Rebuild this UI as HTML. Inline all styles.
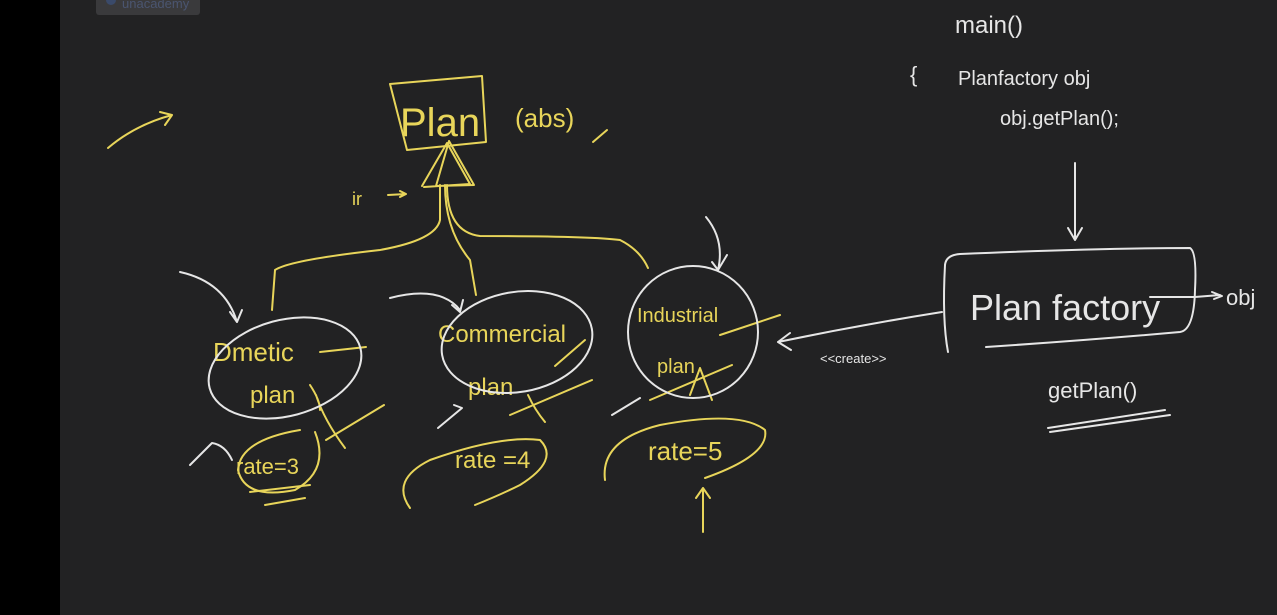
<!DOCTYPE html>
<html><head><meta charset="utf-8"><style>
html,body{margin:0;padding:0;width:1277px;height:615px;overflow:hidden;background:#000}
svg{display:block}
text{font-family:"Liberation Sans",sans-serif}
</style></head><body>
<svg width="1277" height="615" viewBox="0 0 1277 615" xmlns="http://www.w3.org/2000/svg">
<rect x="0" y="0" width="1277" height="615" fill="#000"/>
<rect x="60" y="0" width="1217" height="615" fill="#222223"/>
<rect x="96" y="-5" width="104" height="20" rx="3" fill="#3a3a3c"/>
<circle cx="111" cy="0" r="5" fill="#3a4a6a"/>
<text x="122" y="8" font-size="13" fill="#4a5570">unacademy</text>

<g fill="none" stroke="#e8d55a" stroke-width="2" stroke-linecap="round" stroke-linejoin="round">
<!-- Plan box -->
<path d="M390 84 L482 76 L486 142 L407 150 Z"/>
<path d="M436 186 L449 141 L474 185 Z M422 186 L447 143 L470 184 L424 187"/>
<path d="M440 185 L440 220 Q436 240 380 250 Q290 260 275 270 L272 310"/>
<path d="M445 185 Q445 230 470 260 L476 295"/>
<path d="M447 185 Q447 232 480 236 Q590 236 620 240 Q640 250 648 268"/>
<path d="M108 148 Q135 125 172 115 M160 112 L172 115 L165 125"/>
<path d="M593 142 L607 130"/>
<path d="M388 195 L406 194 M400 191 L406 194 L400 197"/>
<!-- strike lines -->
<path d="M320 352 L366 347"/>
<path d="M310 385 Q320 400 320 410 M316 395 Q324 420 345 448"/>
<path d="M326 440 L384 405"/>
<path d="M555 366 L585 340"/>
<path d="M510 415 L592 380 M528 395 Q535 410 545 422"/>
<path d="M720 335 L780 315"/>
<path d="M650 400 L732 365 M690 395 L700 368 L712 400"/>
<!-- rate ellipses -->
<path d="M300 430 Q240 440 238 470 Q245 500 295 490 Q330 470 315 432"/>
<path d="M250 492 L310 485 M265 505 L305 498"/>
<path d="M410 508 Q390 480 430 460 Q500 435 540 440 Q560 460 520 485 Q500 495 475 505"/>
<path d="M605 480 Q600 440 660 425 Q740 410 765 430 Q770 455 705 478"/>
<path d="M703 532 L703 488 M696 498 L703 488 L710 498"/>
</g>
<g fill="#e8d55a" font-size="28">
<text x="400" y="136" font-size="40">Plan</text>
<text x="515" y="127" font-size="26">(abs)</text>
<text x="352" y="205" font-size="18">ir</text>
<text x="213" y="361" font-size="26">Dmetic</text>
<text x="250" y="403" font-size="24">plan</text>
<text x="438" y="342" font-size="24">Commercial</text>
<text x="468" y="395" font-size="24">plan</text>
<text x="637" y="322" font-size="20">Industrial</text>
<text x="657" y="373" font-size="20">plan</text>
<text x="236" y="474" font-size="22">rate=3</text>
<text x="455" y="468" font-size="24">rate =4</text>
<text x="648" y="460" font-size="26">rate=5</text>
</g>

<g fill="none" stroke="#e6e6e6" stroke-width="2" stroke-linecap="round" stroke-linejoin="round">
<ellipse cx="285" cy="368" rx="78" ry="48" transform="rotate(-15 285 368)"/>
<ellipse cx="517" cy="342" rx="76" ry="50" transform="rotate(-10 517 342)"/>
<ellipse cx="693" cy="332" rx="65" ry="66"/>
<path d="M180 272 Q225 282 237 322 M230 312 L237 322 L242 310"/>
<path d="M390 298 Q440 285 460 310 M452 305 L460 312 L463 300"/>
<path d="M706 217 Q725 240 718 270 M712 262 L718 270 L727 255"/>
<path d="M190 465 L212 443 Q225 445 232 460"/>
<path d="M438 428 L462 408 L454 405"/>
<path d="M612 415 L640 398"/>
<path d="M942 312 Q860 325 778 342 M790 333 L778 342 L791 350"/>
<path d="M1075 163 L1075 237 M1068 228 L1075 240 L1082 228"/>
<path d="M945 265 Q946 255 960 254 Q1100 248 1190 248 Q1197 252 1195 290 Q1194 330 1180 332 Q1090 340 986 347"/>
<path d="M945 265 Q942 320 948 352"/>
<path d="M1150 297 L1195 297 L1220 295 M1212 292 L1222 296 L1214 299"/>
<path d="M1048 428 L1165 410 M1050 432 L1170 415"/>
</g>
<g fill="#e6e6e6">
<text x="955" y="33" font-size="24">main()</text>
<text x="910" y="82" font-size="22">{</text>
<text x="958" y="85" font-size="20">Planfactory  obj</text>
<text x="1000" y="125" font-size="20">obj.getPlan();</text>
<text x="970" y="320" font-size="36">Plan factory</text>
<text x="1226" y="305" font-size="22">obj</text>
<text x="820" y="363" font-size="13">&lt;&lt;create&gt;&gt;</text>
<text x="1048" y="398" font-size="22">getPlan()</text>
</g>
</svg>
</body></html>
